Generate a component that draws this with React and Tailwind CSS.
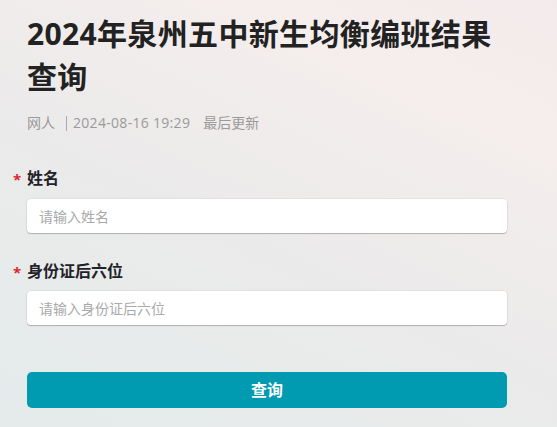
import React, { useState } from 'react';

export default function App() {
    const [form, setForm] = useState({ name: '', idTail: '' });

    const handleChange = (e) => {
        const { name, value } = e.target;
        setForm(prev => ({ ...prev, [name]: value }));
    };

    const inputClass = "block mt-[9px] w-full h-[34px] rounded-[4px] bg-white px-[12px] text-[14px] text-[#333] outline-none shadow-[0_1px_1px_rgba(0,0,0,0.22),0_0_0_1px_rgba(0,0,0,0.04)] placeholder:text-[#a9a9a9]";

    return (
        <div
            className="w-[557px] h-[427px] overflow-hidden bg-[linear-gradient(25deg,#e4ebeb_0%,#ebeaea_45%,#f5eeed_80%,#f3ebeb_100%)]"
            style={{ fontFamily: '"Open Sans", "Noto Sans CJK SC", sans-serif' }}
        >
            <div className="ml-[27px] w-[480px] pt-[12px]">
                {/* 标题 */}
                <h1 className="text-[30px] leading-[43px] font-bold tracking-[0.35px] text-[#222]">
                    2024年泉州五中新生均衡编班结果查询
                </h1>
                <div className="mt-[15px] flex items-center text-[14px] leading-[20px] text-[#9a9a9a]">
                    <span>网人</span>
                    <span className="ml-[11px] mr-[6px] w-px h-[15px] bg-[#aaa]" />
                    <span className="tracking-[0.3px]">2024-08-16 19:29</span>
                    <span className="ml-[13px]">最后更新</span>
                </div>

                {/* 表单 */}
                <form className="mt-[33px]" onSubmit={(e) => e.preventDefault()}>
                    <div className="flex items-center h-[24px] -ml-[14px]">
                        <span className="w-[14px] text-[#d9262c] text-[15px] font-bold leading-none pt-[2px]">*</span>
                        <label className="text-[16px] font-bold text-[#1f2329]">姓名</label>
                    </div>
                    <input
                        name="name"
                        value={form.name}
                        onChange={handleChange}
                        placeholder="请输入姓名"
                        className={inputClass}
                    />

                    <div className="mt-[26px] flex items-center h-[24px] -ml-[14px]">
                        <span className="w-[14px] text-[#d9262c] text-[15px] font-bold leading-none pt-[2px]">*</span>
                        <label className="text-[16px] font-bold text-[#1f2329]">身份证后六位</label>
                    </div>
                    <input
                        name="idTail"
                        value={form.idTail}
                        onChange={handleChange}
                        placeholder="请输入身份证后六位"
                        className={`${inputClass} !mt-[8px]`}
                    />

                    <button
                        type="submit"
                        className="block mt-[47px] w-full h-[36px] rounded-[5px] bg-[#009bb1] text-white text-[16px] font-bold"
                    >
                        查询
                    </button>
                </form>
            </div>
        </div>
    );
}
